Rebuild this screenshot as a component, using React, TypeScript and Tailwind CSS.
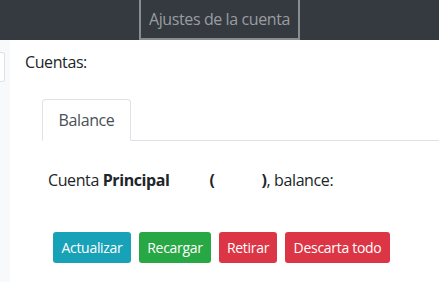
export default function App() {
  const font = { fontFamily: '"Open Sans", "Noto Sans", sans-serif' }
  return (
    <div className="w-[439px] h-[282px] overflow-hidden bg-white text-[#212529]" style={font}>
      <header className="h-10 bg-[#343a40] flex justify-center">
        <div className="h-10 w-[161px] border-2 border-t-0 border-[#8a8d90] bg-[#343a40] flex items-center justify-center text-[16px] tracking-[-0.4px] text-[#9a9da0]">
          Ajustes de la cuenta
        </div>
      </header>
      <div className="flex h-[242px]">
        <aside className="w-[10px] bg-[#f8f9fa] pt-[12px]">
          <div className="w-[5px] h-[30px] bg-white border border-l-0 border-[#dee2e6] rounded-r-[3px]" />
        </aside>
        <main className="flex-1 pl-[15px]">
          <div className="pt-[10px] text-[16px] leading-[24px] tracking-[-0.4px]">Cuentas:</div>
          <div className="mt-[25px] ml-[17px] flex border-b border-[#dee2e6]">
            <div className="h-[42px] w-[89px] -mb-px bg-white border border-b-white border-[#dee2e6] rounded-t-[4px] flex items-center justify-center text-[16px] tracking-[-0.4px] text-[#495057]">
              Balance
            </div>
          </div>
          <div className="ml-[23px] mt-[27px] text-[16px] leading-[24px] tracking-[-0.4px] flex">
            <span>Cuenta&nbsp;</span>
            <b className="font-bold">Principal</b>
            <span className="w-[40px]" />
            <b className="font-bold">(</b>
            <span className="w-[47px]" />
            <b className="font-bold">)</b>
            <span>, balance:</span>
          </div>
          <div className="ml-[28px] mt-[40px] flex gap-[8px] text-[14px] tracking-[-0.3px] text-white">
            <button className="h-[31px] w-[78px] rounded-[3px] bg-[#17a2b8]">Actualizar</button>
            <button className="h-[31px] w-[72px] rounded-[3px] bg-[#28a745]">Recargar</button>
            <button className="h-[31px] w-[58px] rounded-[3px] bg-[#dc3545]">Retirar</button>
            <button className="h-[31px] w-[105px] rounded-[3px] bg-[#dc3545]">Descarta todo</button>
          </div>
        </main>
      </div>
    </div>
  )
}
